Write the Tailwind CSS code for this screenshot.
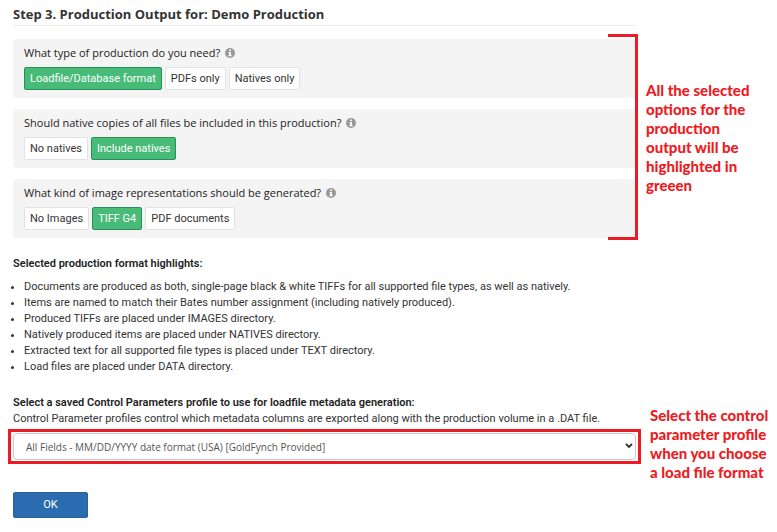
<!DOCTYPE html>
<html lang="en">
<head>
<meta charset="utf-8">
<meta name="viewport" content="width=device-width, initial-scale=1">
<title>Production Output</title>
<script src="https://cdn.jsdelivr.net/npm/@tailwindcss/browser@4"></script>
</head>
<body class="bg-white font-['Roboto','Open_Sans',sans-serif] text-[11px] leading-4 text-[#333]">
<svg class="hidden" aria-hidden="true">
  <symbol id="info" viewBox="0 0 10 10">
    <circle cx="5" cy="5" r="5" fill="#999"/>
    <path d="M4.1 1.5h1.8v1.4H4.1zM3.5 3.9h2.4v3.2h.7v1.1H3.5V7.1h.7V5h-.7z" fill="#fff"/>
  </symbol>
</svg>
<main class="grid grid-cols-[minmax(0,1fr)_141px] pl-[13px]">
  <h1 class="border-b border-[#eee] pt-1 pb-px font-['Open_Sans',sans-serif] text-[13px] leading-5 font-bold">Step 3. Production Output for: Demo Production</h1>
  <div></div>

  <div class="relative mt-[13px] flex flex-col gap-[11px]">
    <section class="rounded-sm bg-[#f4f4f4] px-[11px] pt-[6px] pb-2">
      <h2 class="flex items-center gap-[5px] font-['Open_Sans',sans-serif] font-medium text-[#222]">What type of production do you need? <svg class="size-[10px]"><use href="#info"/></svg></h2>
      <div class="mt-[6px] flex gap-[3px]">
        <button class="h-[23px] rounded-xs border border-[#23915a] bg-[#48bb78] px-[5px] text-white">Loadfile/Database format</button>
        <button class="h-[23px] rounded-xs border border-[#e2e2e2] bg-white px-[5px]">PDFs only</button>
        <button class="h-[23px] rounded-xs border border-[#e2e2e2] bg-white px-[5px]">Natives only</button>
      </div>
    </section>
    <section class="rounded-sm bg-[#f4f4f4] px-[11px] pt-[6px] pb-2">
      <h2 class="flex items-center gap-[5px] font-['Open_Sans',sans-serif] font-medium text-[#222]">Should native copies of all files be included in this production? <svg class="size-[10px]"><use href="#info"/></svg></h2>
      <div class="mt-[6px] flex gap-[3px]">
        <button class="h-[23px] rounded-xs border border-[#e2e2e2] bg-white px-[5px]">No natives</button>
        <button class="h-[23px] rounded-xs border border-[#23915a] bg-[#48bb78] px-[5px] text-white">Include natives</button>
      </div>
    </section>
    <section class="rounded-sm bg-[#f4f4f4] px-[11px] pt-[6px] pb-2">
      <h2 class="flex items-center gap-[5px] font-['Open_Sans',sans-serif] font-medium text-[#222]">What kind of image representations should be generated? <svg class="size-[10px]"><use href="#info"/></svg></h2>
      <div class="mt-[6px] flex gap-[3px]">
        <button class="h-[23px] rounded-xs border border-[#e2e2e2] bg-white px-[5px]">No Images</button>
        <button class="h-[23px] rounded-xs border border-[#23915a] bg-[#48bb78] px-[5px] text-white">TIFF G4</button>
        <button class="h-[23px] rounded-xs border border-[#e2e2e2] bg-white px-[5px]">PDF documents</button>
      </div>
    </section>
    <div class="absolute -top-[5px] -right-[2px] -bottom-[2px] w-[30px] border-3 border-l-0 border-[#ed1c24]"></div>
  </div>
  <p class="self-center pt-[11px] pr-3 pl-[10px] font-['Lato',sans-serif] text-[15px] leading-[19px] font-black text-[#ed1c24]">All the selected options for the production output will be highlighted in greeen</p>

  <section class="mt-[18px]">
    <h2 class="font-semibold text-[#222]">Selected production format highlights:</h2>
    <ul class="mt-[7px] list-disc pl-[11px]">
      <li>Documents are produced as both, single-page black &amp; white TIFFs for all supported file types, as well as natively.</li>
      <li>Items are named to match their Bates number assignment (including natively produced).</li>
      <li>Produced TIFFs are placed under IMAGES directory.</li>
      <li>Natively produced items are placed under NATIVES directory.</li>
      <li>Extracted text for all supported file types is placed under TEXT directory.</li>
      <li>Load files are placed under DATA directory.</li>
    </ul>
  </section>
  <div></div>

  <section class="mt-[20px]">
    <label for="profile" class="block font-semibold text-[#222]">Select a saved Control Parameters profile to use for loadfile metadata generation:</label>
    <p class="whitespace-nowrap">Control Parameter profiles control which metadata columns are exported along with the production volume in a .DAT file.</p>
    <div class="relative -mr-[5px] -ml-[5px] mt-[2px] border-3 border-[#ed1c24] px-[2px] py-px">
      <select id="profile" class="block h-[27px] w-full appearance-none rounded-sm border border-[#ccc] bg-white pl-3 font-['Open_Sans',sans-serif] text-[10px] text-[#555]">
        <option>All Fields - MM/DD/YYYY date format (USA) [GoldFynch Provided]</option>
      </select>
      <svg class="pointer-events-none absolute top-[11px] right-[5px] h-[6px] w-[8px]" viewBox="0 0 8 6" fill="none" stroke="#333" stroke-width="1.8"><path d="M1 1l3 3 3-3"/></svg>
    </div>
  </section>
  <p class="row-span-2 pt-[31px] pl-[14px] font-['Lato',sans-serif] text-[15px] leading-[19px] font-black whitespace-nowrap text-[#ed1c24]">Select the control<br>parameter profile<br>when you choose<br>a load file format</p>

  <div class="mt-[28px]">
    <button class="h-[26px] w-[75px] rounded-xs border border-[#2b5f9e] bg-[#2b6cb0] text-white">OK</button>
  </div>
</main>
</body>
</html>
